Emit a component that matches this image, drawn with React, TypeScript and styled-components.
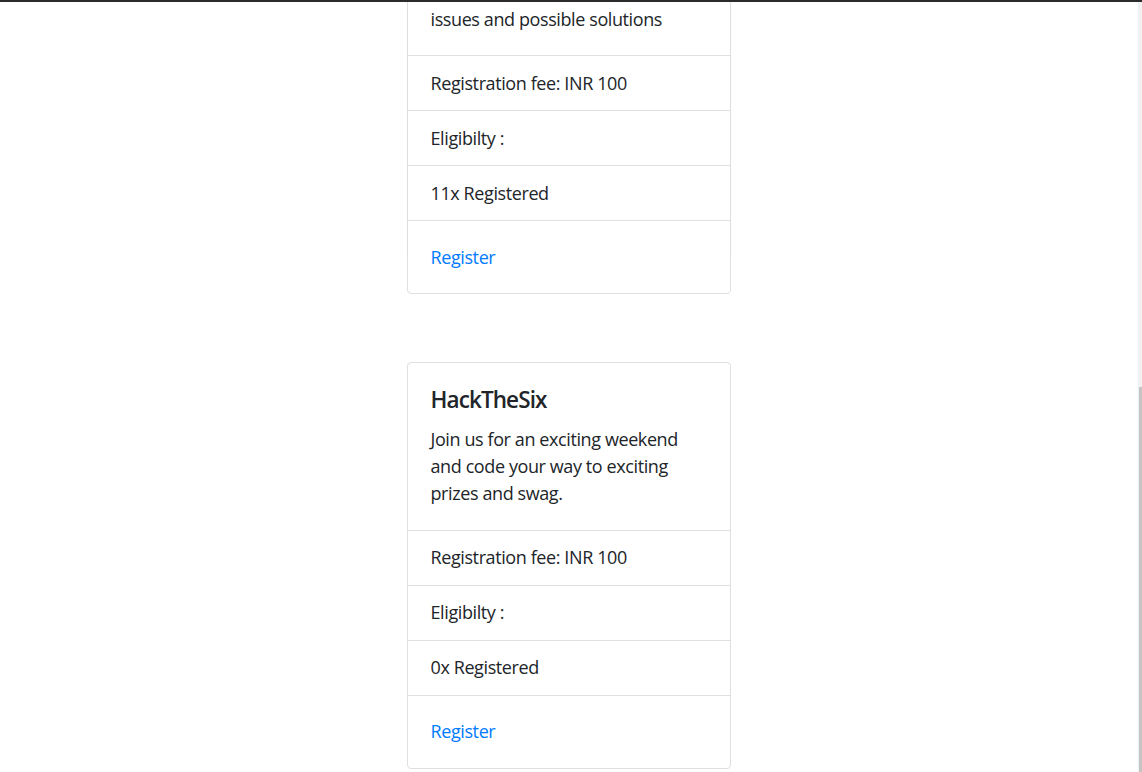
import React from "react"
import styled, { createGlobalStyle } from "styled-components"

const GlobalStyle = createGlobalStyle`
  *, *::before, *::after {
    box-sizing: border-box;
  }
  html {
    font-size: 18px;
  }
  body {
    margin: 0;
    font-family: "Segoe UI", "Open Sans", "Noto Sans", sans-serif;
    font-size: 1rem;
    line-height: 1.5;
    letter-spacing: -0.4px;
    color: #212529;
    background: #fff;
  }
`;

const Screen = styled.div`
    display: flex;
    height: 772px;
    border-top: 2px solid #2b2b2b;
    overflow: hidden;
`;

const Main = styled.main`
    flex: 1;
    display: flex;
    flex-direction: column;
    align-items: center;
    gap: 68px;
`;

const ScrollTrack = styled.div`
    width: 4px;
    display: flex;
    flex-direction: column;
    align-items: flex-end;
    background-color: #f1f1f1;
`;

const ScrollThumb = styled.div`
    margin-top: 385px;
    flex: 1;
    width: 3px;
    background-color: #c4c4c4;
`;

const Card = styled.div<{$clipped?: boolean}>`
    width: 18rem;
    flex-shrink: 0;
    background-color: #fff;
    border: 1px solid rgba(0, 0, 0, 0.125);
    border-top: ${(props) => props.$clipped ? 'none' : '1px solid rgba(0, 0, 0, 0.125)'};
    border-radius: ${(props) => props.$clipped ? '0 0 .25rem .25rem' : '.25rem'};
`;

const CardBody = styled.div<{$clipped?: boolean}>`
    padding: 1.25rem;
    padding-top: ${(props) => props.$clipped ? '3.5px' : '1.25rem'};
`;

const CardTitle = styled.h5`
    margin: 0 0 .75rem;
    font-size: 1.25rem;
    font-weight: 600;
    line-height: 1.2;
    letter-spacing: -0.9px;
`;

const CardText = styled.p`
    margin: 0;
`;

const ListItem = styled.div`
    padding: .75rem 1.25rem;
    border-top: 1px solid rgba(0, 0, 0, 0.125);
`;

const Footer = styled(CardBody)`
    border-top: 1px solid rgba(0, 0, 0, 0.125);
`;

const RegisterLink = styled.a`
    color: #007bff;
    text-decoration: none;
    cursor: pointer;

    &:hover {
        text-decoration: underline;
    }
`;

type EventCardProps = {
    title?: string;
    text: string;
    fee: number;
    registered: number;
    clipped?: boolean;
}

function EventCard({ title, text, fee, registered, clipped }: EventCardProps) {
    return (
        <Card $clipped={clipped}>
            <CardBody $clipped={clipped}>
                {title && <CardTitle>{title}</CardTitle>}
                <CardText>{text}</CardText>
            </CardBody>
            <ListItem>Registration fee: INR {fee}</ListItem>
            <ListItem>Eligibilty :</ListItem>
            <ListItem>{registered}x Registered</ListItem>
            <Footer>
                <RegisterLink href="#">Register</RegisterLink>
            </Footer>
        </Card>
    )
}

export default function App() {
    return (
        <>
            <GlobalStyle />
            <Screen>
                <Main>
                    <EventCard
                        clipped
                        text="issues and possible solutions"
                        fee={100}
                        registered={11}
                    />
                    <EventCard
                        title="HackTheSix"
                        text="Join us for an exciting weekend and code your way to exciting prizes and swag."
                        fee={100}
                        registered={0}
                    />
                </Main>
                <ScrollTrack>
                    <ScrollThumb />
                </ScrollTrack>
            </Screen>
        </>
    )
}
